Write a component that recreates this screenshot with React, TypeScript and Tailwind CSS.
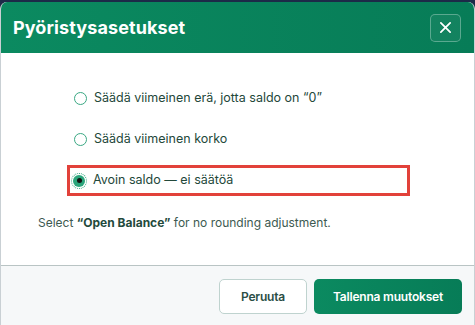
import { useState } from "react"

const options = [
    { id: "last", label: "Säädä viimeinen erä, jotta saldo on “0”" },
    { id: "rate", label: "Säädä viimeinen korko" },
    { id: "open", label: "Avoin saldo — ei säätöä" },
]

export default function App() {
    const [selected, setSelected] = useState("open")

    return (
        <div className="w-[475px] h-[325px] bg-[#1c2a48] pt-[2px] overflow-hidden font-['Inter',sans-serif]">
            <div className="h-[330px] bg-white rounded-t-[7px] border-l border-r border-[#c9d0d4] overflow-hidden flex flex-col">
                <div className="h-[51px] shrink-0 bg-gradient-to-r from-[#0b8a60] to-[#077c57] flex items-center justify-between pl-[12px] pr-[13px]">
                    <h1 className="text-[18px] font-bold text-white tracking-[0.1px]">Pyöristysasetukset</h1>
                    <button className="w-[31px] h-[28px] rounded-[5px] border border-white/30 bg-white/5 flex items-center justify-center">
                        <svg width="13" height="13" viewBox="0 0 14 14" fill="none" stroke="white" strokeWidth="1.9" strokeLinecap="round">
                            <path d="M2 2l10 10M12 2L2 12" />
                        </svg>
                    </button>
                </div>

                <div className="h-[212px] shrink-0 pt-[30px] px-[36px]">
                    <div className="flex flex-col gap-[10px] pl-[30px]">
                        {options.map((o) => {
                            const isSel = selected === o.id
                            return (
                                <label
                                    key={o.id}
                                    onClick={() => setSelected(o.id)}
                                    className={`h-[31px] w-[343px] flex items-center gap-[6px] cursor-pointer border-[3px] ${
                                        isSel ? "border-[#e2413a] pl-[1px]" : "border-transparent pl-[3px]"
                                    }`}
                                >
                                    {isSel ? (
                                        <span className="w-[16px] h-[16px] rounded-full border border-dotted border-[#2aa57b] flex items-center justify-center">
                                            <span className="w-[12px] h-[12px] rounded-full bg-[#2aa57b] flex items-center justify-center">
                                                <span className="w-[5px] h-[5px] rounded-full bg-[#111]" />
                                            </span>
                                        </span>
                                    ) : (
                                        <span className="w-[13px] h-[13px] ml-[1px] mr-[1px] rounded-full border-[1.5px] border-[#3aa883] bg-white" />
                                    )}
                                    <span className="text-[12.5px] text-[#23483a]">{o.label}</span>
                                </label>
                            )
                        })}
                    </div>
                    <p className="mt-[18px] ml-[1px] text-[12px] text-[#3d5a51]">
                        Select <span className="font-bold text-[#234a3c]">“Open Balance”</span> for no rounding adjustment.
                    </p>
                </div>

                <div className="flex-1 bg-[#f6f8f9] border-t border-[#b9c4c4] flex justify-end gap-[7px] pt-[13px] pr-[12px]">
                    <button className="w-[88px] h-[35px] rounded-[5px] border border-[#bfd3cf] bg-white text-[12px] tracking-[-0.2px] font-semibold text-[#2b4e45]">
                        Peruuta
                    </button>
                    <button className="w-[148px] h-[35px] rounded-[5px] bg-gradient-to-r from-[#0b8a60] to-[#077c57] text-[12px] tracking-[-0.2px] font-semibold text-white">
                        Tallenna muutokset
                    </button>
                </div>
            </div>
        </div>
    )
}
